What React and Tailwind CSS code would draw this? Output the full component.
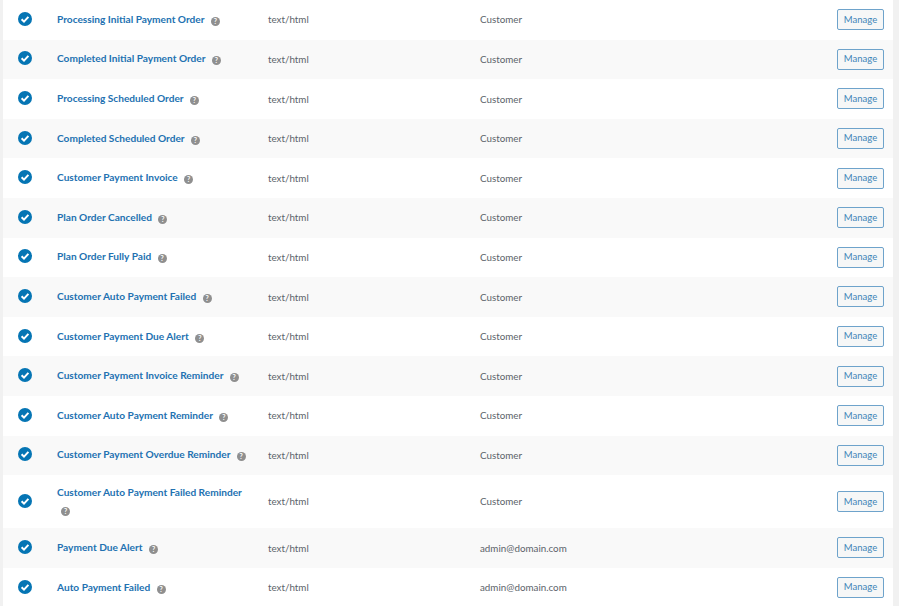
import React from 'react'

const rows = [
  ['Processing Initial Payment Order', 'Customer'],
  ['Completed Initial Payment Order', 'Customer'],
  ['Processing Scheduled Order', 'Customer'],
  ['Completed Scheduled Order', 'Customer'],
  ['Customer Payment Invoice', 'Customer'],
  ['Plan Order Cancelled', 'Customer'],
  ['Plan Order Fully Paid', 'Customer'],
  ['Customer Auto Payment Failed', 'Customer'],
  ['Customer Payment Due Alert', 'Customer'],
  ['Customer Payment Invoice Reminder', 'Customer'],
  ['Customer Auto Payment Reminder', 'Customer'],
  ['Customer Payment Overdue Reminder', 'Customer'],
  ['Customer Auto Payment Failed Reminder', 'Customer'],
  ['Payment Due Alert', 'admin@domain.com'],
  ['Auto Payment Failed', 'admin@domain.com'],
]

function Check() {
  return (
    <svg width="14" height="14" viewBox="0 0 14 14" className="block">
      <circle cx="7" cy="7" r="7" fill="#0575b4" />
      <path d="M3.6 7.2 L6 9.6 L10.4 4.9" fill="none" stroke="#fff" strokeWidth="2" />
    </svg>
  )
}

function Help() {
  return (
    <span className="inline-flex w-[9px] h-[9px] rounded-full bg-[#8f8f8f] text-white text-[7px] leading-none font-bold items-center justify-center align-[-1px] ml-[4px]">?</span>
  )
}

export default function App() {
  return (
    <div className="w-[899px] h-[606px] overflow-hidden bg-[#f1f1f1] font-['Lato',sans-serif] text-[9.8px] text-[#5c636a]">
      <div className="ml-[3px] w-[890px] bg-white">
        {rows.map(([name, to], i) => (
          <div
            key={name}
            className={`grid grid-cols-[54px_211px_212px_1fr] items-center ${i % 2 ? 'bg-[#f9f9f9]' : 'bg-white'} ${i === 12 ? 'h-[53px]' : 'h-[39.6px]'}`}
          >
            <div className="pl-[15px] pb-[2px]"><Check /></div>
            <div className="pr-[20px] pb-px text-[10.15px] font-bold text-[#2271b1] leading-[17px]">
              {name} <Help />
            </div>
            <div>text/html</div>
            <div className="flex items-center justify-between pr-[9px]">
              <span>{to}</span>
              <button className="w-[47px] h-[21px] border border-[#6ea3cb] rounded-[2px] bg-[#f6f7f7] text-[#3f85b8] text-[9.5px]">Manage</button>
            </div>
          </div>
        ))}
      </div>
    </div>
  )
}
